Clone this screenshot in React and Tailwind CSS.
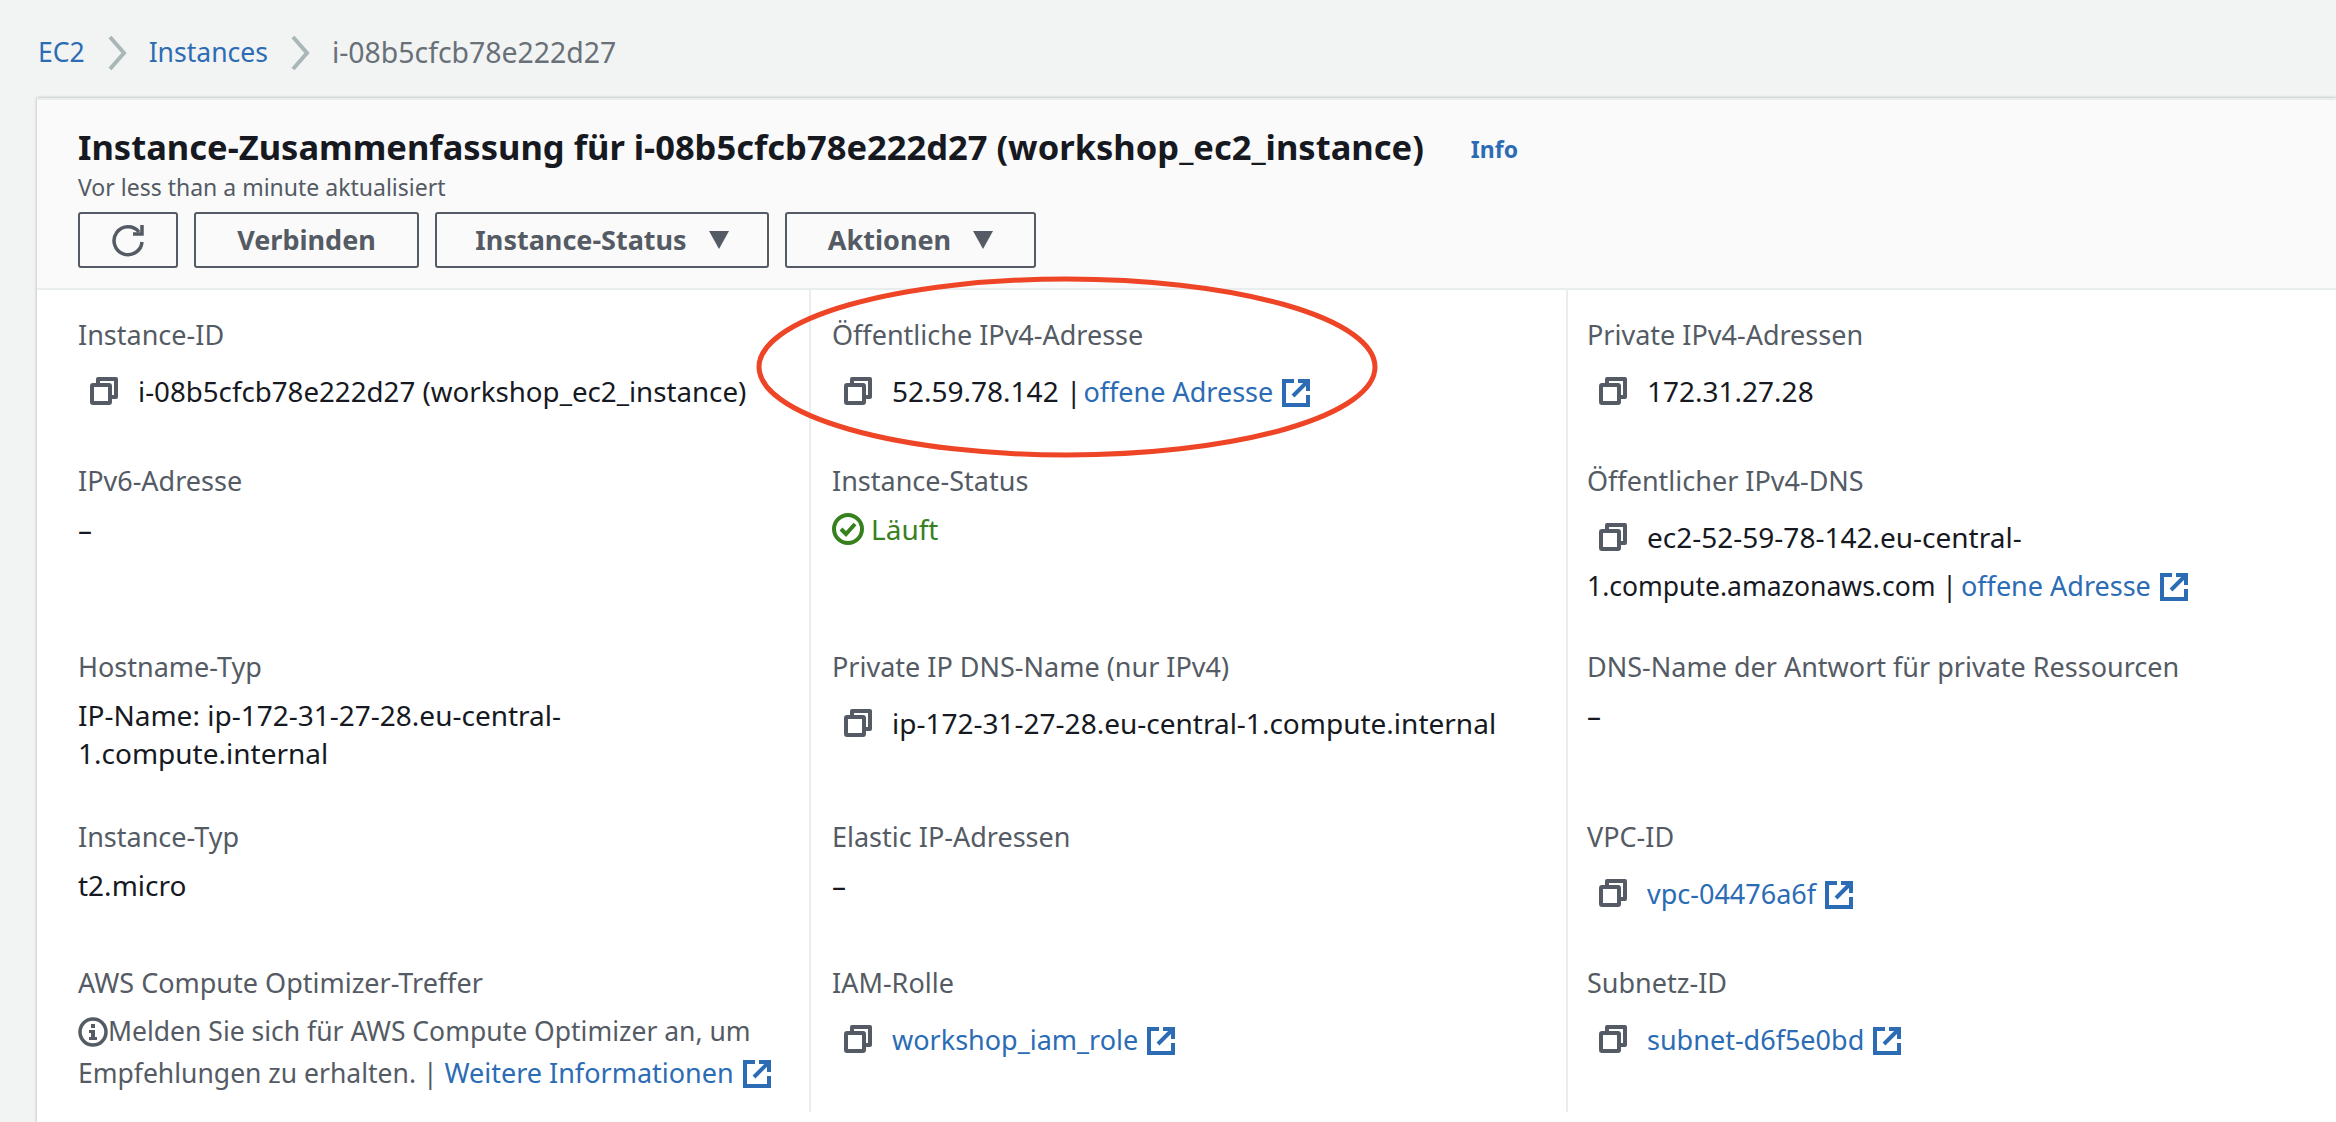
const FONT = "font-['Noto_Sans','Open_Sans',sans-serif]";

function CopyIcon() {
  return (
    <svg viewBox="0 0 28 28" className="w-[28px] h-[28px] shrink-0" fill="none" stroke="#545b64" strokeWidth="4">
      <path d="M8 6V2h18v18h-5" strokeLinejoin="round" />
      <rect x="2" y="8" width="18" height="18" rx="1" strokeLinejoin="round" />
    </svg>
  );
}

function ExtIcon() {
  return (
    <svg viewBox="0 0 28 28" className="w-[28px] h-[28px] shrink-0 ml-[9px]" fill="none" stroke="#2b6cb5" strokeWidth="4">
      <path d="M12 2H2v24h24V16" />
      <path d="M16 2h10v10M25 3L11 17" />
    </svg>
  );
}

function Link({ children, className = "" }) {
  return (
    <span className={`text-[#2b6cb5] text-[27px] ${className}`}>
      {children}
      <span className="inline-block align-[-5px]"><ExtIcon /></span>
    </span>
  );
}

function Field({ label, children, className = "" }) {
  return (
    <div className={className}>
      <div className="text-[#545b64] h-[38px] leading-[38px]">{label}</div>
      <div className="mt-[10px] leading-[38px] text-[28px] text-[#16191f]">{children}</div>
    </div>
  );
}

function Copy({ children, after }) {
  return (
    <div className="pt-[3px] leading-[48px]">
      <div className="flex items-start pl-[12px]">
        <span className="mt-[10px] mr-[20px]"><CopyIcon /></span>
        <div>{children}</div>
      </div>
      {after && <div>{after}</div>}
    </div>
  );
}

function Btn({ children, className = "", caret }) {
  return (
    <button className={`h-[56px] border-2 border-[#545b64] rounded-[3px] text-[#545b64] font-bold flex items-center justify-center ${className}`}>
      {children}
      {caret && (
        <svg viewBox="0 0 20 18" className="w-[20px] h-[18px] ml-[22px]" fill="#545b64"><path d="M0 0h20L10 18z" /></svg>
      )}
    </button>
  );
}

export default function App() {
  return (
    <div className={`relative w-[2336px] h-[1122px] overflow-hidden bg-[#f2f3f3] text-[27px] ${FONT}`}>
      {/* breadcrumb */}
      <div className="h-[98px] pl-[38px] pt-[30px] flex items-start leading-[44px]">
        <span className="text-[#2b6cb5] text-[26.5px]">EC2</span>
        <svg viewBox="0 0 20 46" className="w-[20px] h-[46px] mx-[22px]" fill="none" stroke="#aab7b8" strokeWidth="4"><path d="M3 7l14 16L3 39" /></svg>
        <span className="text-[#2b6cb5] text-[26.5px]">Instances</span>
        <svg viewBox="0 0 20 46" className="w-[20px] h-[46px] mx-[22px]" fill="none" stroke="#aab7b8" strokeWidth="4"><path d="M3 7l14 16L3 39" /></svg>
        <span className="text-[#687078] text-[28.4px]">i-08b5cfcb78e222d27</span>
      </div>

      {/* panel */}
      <div className="ml-[37px] h-[1024px] bg-white border-t-2 border-[#eaeded] shadow-[0_0_3px_rgba(0,28,36,0.3)]">
        <div className="h-[190px] bg-[#fafafa] border-b-2 border-[#eaeded] px-[41px] pt-[22px]">
          <div className="flex items-center h-[50px]">
            <h1 className="text-[34.5px] font-bold text-[#16191f] whitespace-nowrap">Instance-Zusammenfassung für i-08b5cfcb78e222d27 (workshop_ec2_instance)</h1>
            <span className="ml-[47px] mt-[4px] text-[#2b6cb5] font-bold text-[23px]">Info</span>
          </div>
          <div className="text-[23px] leading-[30px] text-[#545b64]">Vor less than a minute aktualisiert</div>
          <div className="flex gap-[16px] mt-[10px]">
            <Btn className="w-[100px]">
              <svg viewBox="0 0 34 34" className="w-[34px] h-[34px]" fill="none" stroke="#545b64" strokeWidth="3.5">
                <path d="M28 9a14 14 0 1 0 3 10" />
                <path d="M31 2v9H22" />
              </svg>
            </Btn>
            <Btn className="w-[225px]">Verbinden</Btn>
            <Btn className="w-[334px]" caret>Instance-Status</Btn>
            <Btn className="w-[251px]" caret>Aktionen</Btn>
          </div>
        </div>

        <div className="grid grid-cols-[774px_757px_1fr] h-[832px]">
          <div className="pl-[41px] pt-[26px] border-r-2 border-[#eaeded] mb-[10px] flex flex-col">
            <Field className="h-[146px]" label="Instance-ID"><Copy><span className="text-[27.7px]">i-08b5cfcb78e222d27 (workshop_ec2_instance)</span></Copy></Field>
            <Field className="h-[186px]" label="IPv6-Adresse">–</Field>
            <Field className="h-[170px]" label="Hostname-Typ">IP-Name: ip-172-31-27-28.eu-central-<br />1.compute.internal</Field>
            <Field className="h-[146px]" label="Instance-Typ">t2.micro</Field>
            <Field label="AWS Compute Optimizer-Treffer">
              <div className="-mt-[2px] leading-[42px] text-[26.5px] text-[#545b64] whitespace-nowrap">
                <svg viewBox="0 0 30 30" className="inline-block w-[30px] h-[30px] align-[-6px]" fill="none">
                  <circle cx="15" cy="15" r="13" stroke="#545b64" strokeWidth="3.5" />
                  <path d="M13 7h4v4h-4zM11 13h6v7h2v3h-8v-3h2v-4h-2z" fill="#545b64" />
                </svg>
                Melden Sie sich für AWS Compute Optimizer an, um<br />
                Empfehlungen zu erhalten. | <Link>Weitere Informationen</Link>
              </div>
            </Field>
          </div>

          <div className="pl-[21px] pt-[26px] border-r-2 border-[#eaeded] mb-[10px] flex flex-col">
            <Field className="h-[146px]" label="Öffentliche IPv4-Adresse"><Copy>52.59.78.142 |<Link className="ml-[2px]">offene Adresse</Link></Copy></Field>
            <Field className="h-[186px]" label="Instance-Status">
              <span className="text-[#37801e] flex items-center">
                <svg viewBox="0 0 32 32" className="w-[32px] h-[32px] mr-[7px]" fill="none" stroke="#37801e" strokeWidth="4">
                  <circle cx="16" cy="16" r="14" />
                  <path d="M9 16l5 5 9-10" />
                </svg>
                Läuft
              </span>
            </Field>
            <Field className="h-[170px]" label="Private IP DNS-Name (nur IPv4)"><Copy>ip-172-31-27-28.eu-central-1.compute.internal</Copy></Field>
            <Field className="h-[146px]" label="Elastic IP-Adressen">–</Field>
            <Field label="IAM-Rolle"><Copy><Link>workshop_iam_role</Link></Copy></Field>
          </div>

          <div className="pl-[19px] pt-[26px] flex flex-col">
            <Field className="h-[146px]" label="Private IPv4-Adressen"><Copy>172.31.27.28</Copy></Field>
            <Field className="h-[186px]" label="Öffentlicher IPv4-DNS">
              <Copy after={<span className="text-[26.5px]">1.compute.amazonaws.com |<Link className="ml-[4px]">offene Adresse</Link></span>}>ec2-52-59-78-142.eu-central-</Copy>
            </Field>
            <Field className="h-[170px]" label="DNS-Name der Antwort für private Ressourcen">–</Field>
            <Field className="h-[146px]" label="VPC-ID"><Copy><Link>vpc-04476a6f</Link></Copy></Field>
            <Field label="Subnetz-ID"><Copy><Link>subnet-d6f5e0bd</Link></Copy></Field>
          </div>
        </div>
      </div>

      {/* red annotation circled over the page */}
      <svg viewBox="0 0 630 190" className="absolute left-[752px] top-[272px] w-[630px] h-[190px]" fill="none" stroke="#ee4527" strokeWidth="5">
        <ellipse cx="315" cy="95" rx="308" ry="88" />
      </svg>
    </div>
  );
}
